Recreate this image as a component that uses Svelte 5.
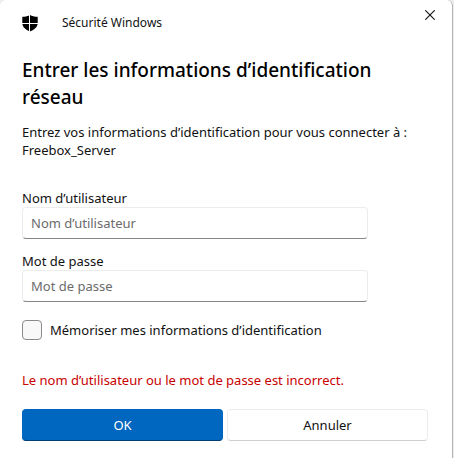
<script>
  let username = "";
  let password = "";
  let remember = false;
  let open = true;

  function close() {
    open = false;
  }
</script>

{#if open}
  <div class="dialog" role="dialog" aria-labelledby="dialog-title">
    <header class="titlebar">
      <svg class="shield" width="16" height="17" viewBox="0 0 16 17" aria-hidden="true">
        <path
          d="M8 0C6.2 1.2 3.6 1.700 0.300 1.800V8c0 4.200 3.200 6.600 7.700 8.500 4.500-1.900 7.700-4.300 7.700-8.500V1.800C12.400 1.700 9.800 1.200 8 0z"
          fill="#000"
        />
        <path d="M7.500 0V17M0 8.500H16" stroke="#fff" stroke-width="1" />
      </svg>
      <span class="app-name">Sécurité Windows</span>
      <button class="close" type="button" aria-label="Fermer" on:click={close}>
        <svg width="10" height="10" viewBox="0 0 10 10" aria-hidden="true">
          <path d="M0.300 0.300L9.700 9.700M9.700 0.300L0.300 9.700" stroke="#111" stroke-width="1.100" />
        </svg>
      </button>
    </header>

    <form on:submit|preventDefault>
      <h1 id="dialog-title">Entrer les informations d’identification réseau</h1>
      <p class="message">
        Entrez vos informations d’identification pour vous connecter à :<br />
        Freebox_Server
      </p>

      <div class="field">
        <label for="username">Nom d’utilisateur</label>
        <input id="username" type="text" placeholder="Nom d’utilisateur" bind:value={username} />
      </div>
      <div class="field">
        <label for="password">Mot de passe</label>
        <input id="password" type="password" placeholder="Mot de passe" bind:value={password} />
      </div>

      <label class="remember">
        <input type="checkbox" bind:checked={remember} />
        <span>Mémoriser mes informations d’identification</span>
      </label>

      <p class="error">Le nom d’utilisateur ou le mot de passe est incorrect.</p>

      <div class="actions">
        <button class="primary" type="submit">OK</button>
        <button type="button" on:click={close}>Annuler</button>
      </div>
    </form>
  </div>
{/if}

<style>
  :global(body) {
    background: #ececec;
  }

  .dialog {
    box-sizing: border-box;
    min-height: 100vh;
    margin-right: 1px;
    padding-bottom: 17px;
    background: #fff;
    border-right: 1px solid #b4b4b4;
    border-radius: 6px 6px 0 0;
    color: #111;
    font-family: "Segoe UI", "Noto Sans", "Open Sans", sans-serif;
    font-size: 13px;
    line-height: 18px;
  }

  .titlebar {
    display: flex;
    align-items: center;
    height: 46px;
    padding-left: 22px;
  }

  .app-name {
    flex: 1;
    margin-left: 24px;
    font-size: 12px;
    line-height: 16px;
  }

  .close {
    display: flex;
    align-self: flex-start;
    align-items: center;
    justify-content: center;
    width: 44px;
    height: 30px;
    padding: 0;
    background: none;
    border: none;
  }

  form {
    padding: 11px 24px 0 22px;
  }

  h1 {
    margin: 0 0 12px;
    color: #000;
    font-size: 19px;
    font-weight: 500;
    line-height: 27px;
  }

  .message {
    margin: 0 0 30px;
  }

  .field {
    display: flex;
    flex-direction: column;
    max-width: 346px;
    margin-bottom: 13px;
  }

  .field input {
    box-sizing: border-box;
    width: 100%;
    height: 32px;
    padding: 0 8px;
    background: #fff;
    border: 1px solid #ececec;
    border-bottom-color: #868686;
    border-radius: 4px;
    color: #111;
    font: inherit;
  }

  .field input::placeholder {
    color: #6b6b6b;
    opacity: 1;
  }

  .remember {
    display: flex;
    align-items: center;
    gap: 8px;
    margin-top: 18px;
  }

  .remember input {
    appearance: none;
    flex: none;
    box-sizing: border-box;
    width: 20px;
    height: 20px;
    margin: 0;
    background: #f8f8f8;
    border: 1px solid #8a8a8a;
    border-radius: 4px;
  }

  .remember input:checked {
    background: #0067c0;
  }

  .error {
    margin: 31px 0 20px;
    color: #c80000;
  }

  .actions {
    display: grid;
    grid-template-columns: 1fr 1fr;
    gap: 4px;
  }

  .actions button {
    height: 32px;
    padding: 0;
    background: #fff;
    border: 1px solid #ececec;
    border-bottom-color: #cfcfcf;
    border-radius: 4px;
    color: #111;
    font: inherit;
  }

  .actions .primary {
    background: #0067c0;
    border-color: #0067c0;
    border-bottom-color: #003e73;
    color: #fff;
  }
</style>
